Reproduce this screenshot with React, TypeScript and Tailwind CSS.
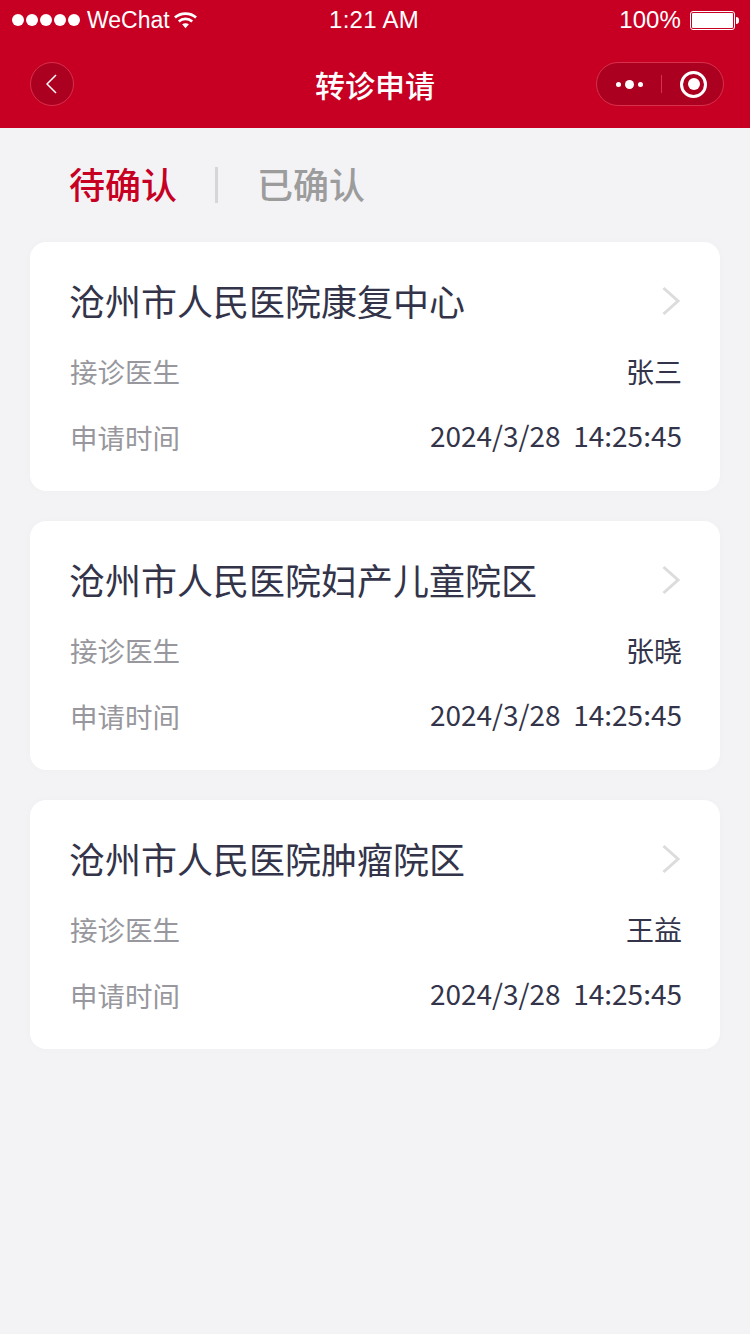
const cards = [
  { name: "沧州市人民医院康复中心", doctor: "张三" },
  { name: "沧州市人民医院妇产儿童院区", doctor: "张晓" },
  { name: "沧州市人民医院肿瘤院区", doctor: "王益" },
];

function StatusBar() {
  return (
    <div className="relative flex h-10 items-center justify-between pl-3 pr-[11px] text-white font-['Liberation_Sans',sans-serif] text-[24px]">
      <div className="flex items-center">
        <div className="flex gap-[2px]">
          {[0, 1, 2, 3, 4].map((i) => (
            <span key={i} className="h-3 w-3 rounded-full bg-white" />
          ))}
        </div>
        <span className="ml-[7px] text-[23px]">WeChat</span>
        <svg className="ml-[4px]" width="23" height="18" viewBox="0 0 24 18" fill="none">
          <path d="M1 6.5C7 1 17 1 23 6.5" stroke="white" strokeWidth="2.8" />
          <path d="M5 10.5C9 7 15 7 19 10.5" stroke="white" strokeWidth="2.8" />
          <path d="M8.500 13.500C10.500 12 13.500 12 15.500 13.500L12 17.500Z" fill="white" />
        </svg>
      </div>
      <span className="absolute left-[329px] tracking-[0.3px]">1:21 AM</span>
      <div className="flex items-center">
        <span className="tracking-[0.1px]">100%</span>
        <div className="ml-[9px] h-[19px] w-[45px] rounded-[3px] border border-white p-px">
          <div className="h-full w-full rounded-[1px] bg-white" />
        </div>
        <div className="ml-px h-[7px] w-[3px] rounded-r-full bg-white" />
      </div>
    </div>
  );
}

function NavBar() {
  return (
    <div className="relative flex h-[88px] items-center justify-between pl-[30px] pr-[26px]">
      <div className="flex h-11 w-11 items-center justify-center rounded-full border border-[#d8304d] bg-[#ab001f]">
        <svg width="11" height="20" viewBox="0 0 11 20" fill="none" className="-ml-[1px]">
          <path d="M10 1L1 10L10 19" stroke="white" strokeWidth="1.5" />
        </svg>
      </div>
      <span className="absolute left-0 right-0 text-center text-[30px] font-medium text-white">转诊申请</span>
      <div className="flex h-11 w-[128px] items-center rounded-full border border-[#d8304d] bg-[#ab001f]">
        <div className="flex w-[64px] items-center justify-center gap-[4px]">
          <span className="h-[5px] w-[5px] rounded-full bg-white" />
          <span className="h-[9px] w-[9px] rounded-full bg-white" />
          <span className="h-[5px] w-[5px] rounded-full bg-white" />
        </div>
        <div className="h-[18px] w-px bg-[#d8304d]" />
        <div className="flex flex-1 items-center justify-center pl-[2px]">
          <div className="flex h-[27px] w-[27px] items-center justify-center rounded-full border-[3px] border-white">
            <span className="h-3 w-3 rounded-full bg-white" />
          </div>
        </div>
      </div>
    </div>
  );
}

function Card({ name, doctor }: { name: string; doctor: string }) {
  return (
    <div className="h-[249px] rounded-[16px] bg-white px-10 pt-[31px] shadow-[0_0_10px_rgba(0,0,0,0.02)]">
      <div className="flex h-[54px] items-center justify-between">
        <span className="-ml-px text-[36px] leading-[54px] text-[#33344a]">{name}</span>
        <svg width="20" height="30" viewBox="0 0 20 30" fill="none" className="-mr-px mt-[2px]">
          <path d="M2.500 2L17 15L2.500 28" stroke="#dcdcdc" strokeWidth="3" />
        </svg>
      </div>
      <div className="mt-[25px] flex h-10 items-center justify-between text-[27.5px]">
        <span className="text-[#97979d]">接诊医生</span>
        <span className="-mr-[2px] -translate-y-px text-[28px] text-[#33344a]">{doctor}</span>
      </div>
      <div className="mt-[26px] flex h-10 items-center justify-between text-[27.5px]">
        <span className="text-[#97979d]">申请时间</span>
        <span className="-mr-[2px] -translate-y-[3px] whitespace-pre text-[28px] text-[#33344a]">2024/3/28  14:25:45</span>
      </div>
    </div>
  );
}

export default function App() {
  return (
    <div className="flex min-h-[1334px] w-[750px] flex-col bg-[#f3f3f6] font-['Noto_Sans_CJK_SC',sans-serif]">
      <div className="bg-[#c70023]">
        <StatusBar />
        <NavBar />
      </div>
      <div className="flex h-[114px] items-center pb-1 pl-[69px] text-[36px] font-medium">
        <span className="text-[#c70023]">待确认</span>
        <div className="ml-[38px] mt-1 h-9 w-[3px] bg-[#d6d6d8]" />
        <span className="ml-[39px] text-[#9c9c9c]">已确认</span>
      </div>
      <div className="flex flex-col gap-[30px] px-[30px]">
        {cards.map((c) => (
          <Card key={c.name} name={c.name} doctor={c.doctor} />
        ))}
      </div>
    </div>
  );
}
